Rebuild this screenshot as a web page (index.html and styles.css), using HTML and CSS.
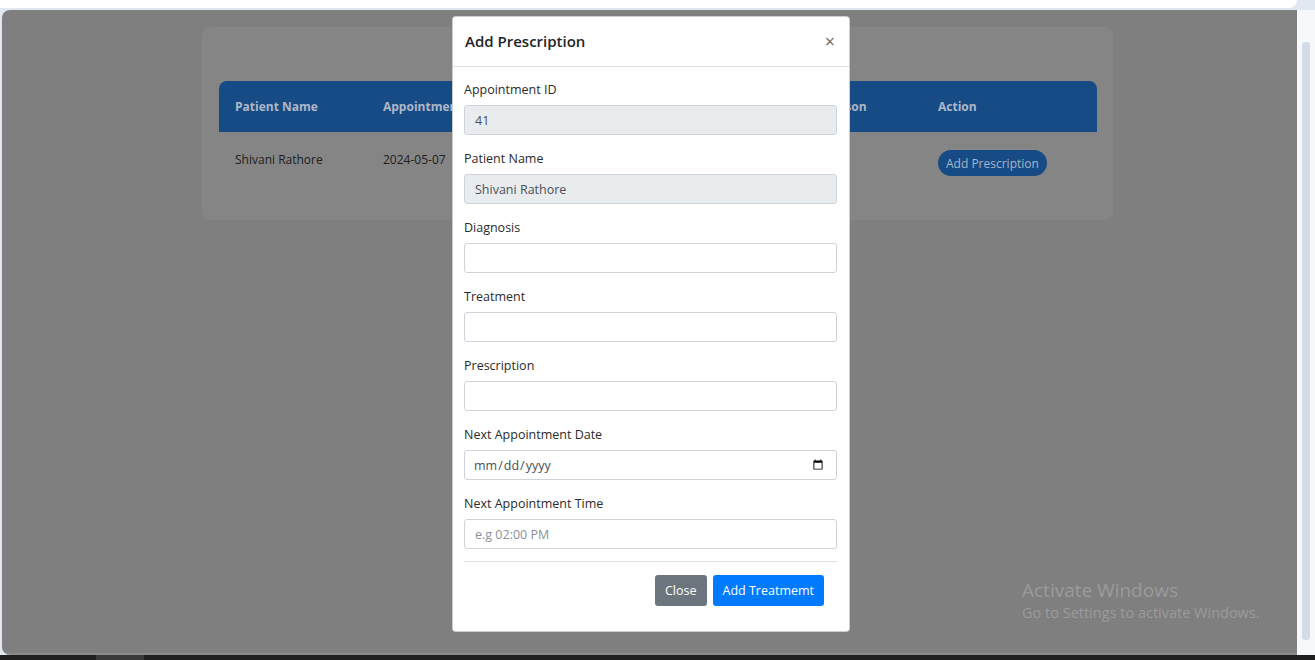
FILE: index.html
```html
<!DOCTYPE html>
<html lang="en">
<head>
<meta charset="utf-8">
<title>Add Prescription</title>
<link rel="stylesheet" href="styles.css">
</head>
<body>
<div class="topbar"></div>
<div class="frame">
  <main class="main">
    <section class="card">
      <table class="table">
        <colgroup>
          <col class="c1"><col class="c2"><col class="c3"><col class="c4"><col class="c5"><col class="c6">
        </colgroup>
        <thead>
          <tr>
            <th>Patient Name</th>
            <th>Appointment Date</th>
            <th>Time</th>
            <th>Status</th>
            <th>Reason</th>
            <th>Action</th>
          </tr>
        </thead>
        <tbody>
          <tr>
            <td>Shivani Rathore</td>
            <td>2024-05-07</td>
            <td></td>
            <td></td>
            <td></td>
            <td><button class="pill">Add Prescription</button></td>
          </tr>
        </tbody>
      </table>
    </section>

    <div class="modal">
      <div class="modal-header">
        <h5 class="modal-title">Add Prescription</h5>
        <span class="close">&times;</span>
      </div>
      <form class="modal-body">
        <div class="group">
          <label>Appointment ID</label>
          <input class="control" type="text" value="41" disabled>
        </div>
        <div class="group">
          <label>Patient Name</label>
          <input class="control" type="text" value="Shivani Rathore" disabled>
        </div>
        <div class="group">
          <label>Diagnosis</label>
          <input class="control" type="text">
        </div>
        <div class="group">
          <label>Treatment</label>
          <input class="control" type="text">
        </div>
        <div class="group">
          <label>Prescription</label>
          <input class="control" type="text">
        </div>
        <div class="group">
          <label>Next Appointment Date</label>
          <input class="control date" type="date">
        </div>
        <div class="group">
          <label>Next Appointment Time</label>
          <input class="control" type="text" placeholder="e.g 02:00 PM">
        </div>
        <div class="modal-footer">
          <button type="button" class="btn btn-secondary">Close</button>
          <button type="button" class="btn btn-primary">Add Treatmemt</button>
        </div>
      </form>
    </div>

    <div class="watermark">
      <div class="wm-title">Activate Windows</div>
      <div class="wm-sub">Go to Settings to activate Windows.</div>
    </div>
  </main>
  <aside class="scroll">
    <div class="thumb"></div>
  </aside>
</div>
<div class="taskbar"><span class="task-item"></span></div>
</body>
</html>
```

FILE: styles.css
```css
* { box-sizing: border-box; }

html, body {
  margin: 0;
  padding: 0;
  height: 660px;
  overflow: hidden;
}

body {
  background: #e1e8f1;
  font-family: "Open Sans", "Noto Sans", sans-serif;
  font-size: 13px;
  color: #212529;
  display: flex;
  flex-direction: column;
}

.topbar {
  height: 8px;
  background: #ffffff;
  margin-right: 18px;
  border-radius: 0 0 8px 0;
  flex: none;
}

.frame {
  flex: 1;
  display: flex;
  padding-top: 2px;
  min-height: 0;
}

.main {
  position: relative;
  flex: 1;
  margin-left: 2px;
  background: #7f7f7f;
  border-radius: 8px 0 0 8px;
  border-bottom: 2px solid #8a8a8a;
  padding: 17px 0 0 200px;
}

.scroll {
  width: 18px;
  flex: none;
  background: #f6f8fb;
  padding: 32px 5px 15px 5px;
}

.thumb {
  height: 100%;
  background: #d4dce8;
  border-radius: 3px;
}

.taskbar {
  height: 5px;
  background: #1f1f1f;
  flex: none;
  padding-left: 96px;
}

.task-item {
  display: block;
  width: 48px;
  height: 5px;
  background: #3a3a3a;
}

/* card + table */
.card {
  width: 911px;
  background: #858585;
  border-radius: 8px;
  padding: 54px 16px 28px 17px;
}

.table {
  width: 878px;
  table-layout: fixed;
  border-collapse: separate;
  border-spacing: 0;
}

.c1, .c2 { width: 148px; }
.c3, .c4 { width: 146px; }
.c5 { width: 115px; }
.c6 { width: 175px; }

.table th {
  background: #174b86;
  color: #aeb7c6;
  font-weight: 700;
  text-align: left;
  padding: 16px;
  font-size: 12px;
  line-height: 19px;
  white-space: nowrap;
  overflow: hidden;
}

.table th:first-child { border-top-left-radius: 8px; }
.table th:last-child { border-top-right-radius: 8px; }

.table td {
  color: #202020;
  padding: 18px 16px 16px;
  font-size: 12px;
  line-height: 20px;
  vertical-align: top;
  white-space: nowrap;
}

.pill {
  margin-top: 0;
  background: #174b86;
  color: #a9b5c8;
  border: none;
  border-radius: 13px;
  height: 26px;
  padding: 0 8px;
  font-family: inherit;
  font-size: 12px;
}

/* modal */
.modal {
  position: absolute;
  left: 450px;
  top: 6px;
  width: 398px;
  background: #ffffff;
  border-radius: 4px;
  border: 1px solid rgba(0,0,0,0.2);
}

.modal-header {
  height: 50px;
  display: flex;
  align-items: center;
  justify-content: space-between;
  padding: 0 14px 2px 12px;
  border-bottom: 1px solid #dee2e6;
}

.modal-title {
  margin: 0;
  font-size: 15px;
  font-weight: 600;
  color: #212529;
}

.close {
  font-size: 18px;
  color: #6c6c6c;
  line-height: 1;
}

.modal-body {
  padding: 13px 12px 0 11px;
  margin: 0;
}

.group {
  margin-bottom: 14px;
}

.group label {
  display: block;
  line-height: 20px;
  margin-bottom: 5px;
  color: #2b2b2b;
  font-size: 12.5px;
}

.control {
  display: block;
  width: 100%;
  height: 30px;
  border: 1px solid #ced4da;
  border-radius: 3px;
  padding: 0 10px;
  font-family: inherit;
  font-size: 12.5px;
  color: #495057;
  background: #ffffff;
}

.control:disabled {
  background: #e9ecef;
  color: #495057;
}

.control::placeholder {
  color: #8a9098;
}

.date {
  color: #495057;
  padding-left: 8px;
}

.modal-footer {
  border-top: 1px solid #dee2e6;
  margin-top: -2px;
  display: flex;
  justify-content: flex-end;
  gap: 6px;
  padding: 13px 13px 25px 13px;
}

.btn {
  height: 31px;
  border: none;
  border-radius: 3px;
  color: #ffffff;
  font-family: inherit;
  font-size: 12.5px;
  padding: 0 10px;
}

.btn-secondary { background: #6c757d; }
.btn-primary { background: #007bff; }

/* watermark */
.watermark {
  position: absolute;
  left: 1020px;
  top: 567px;
  color: #9b9b9b;
}

.wm-title {
  font-size: 19px;
  line-height: 26px;
}

.wm-sub {
  font-size: 14.5px;
  line-height: 20px;
}
```
